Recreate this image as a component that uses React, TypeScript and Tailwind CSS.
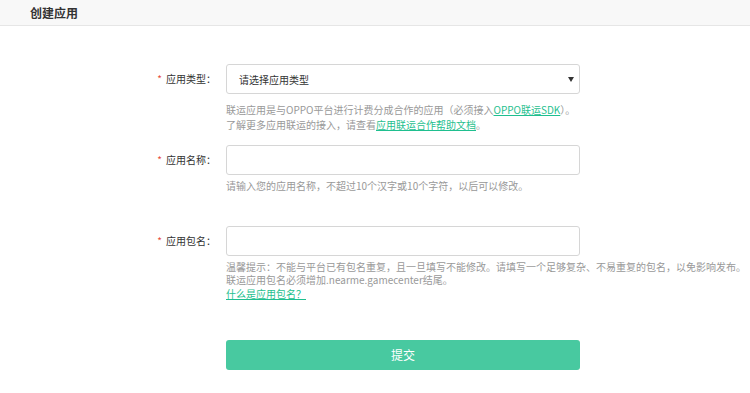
const font = "font-['Microsoft_YaHei','Noto_Sans_CJK_SC',sans-serif]";

const Label = ({ text }: { text: string }) => (
  <div className="w-[216px] shrink-0 text-right text-[10px] leading-[30px] text-[#333]">
    <span className="mr-[4px] text-[#e74c3c]">*</span>
    {text}
  </div>
);

const Link = ({ children }: { children: string }) => (
  <a href="#" className="text-[#1fbf8f] underline underline-offset-[1px]">
    {children}
  </a>
);

export default function App() {
  return (
    <div className={`${font} min-h-[393px] w-[750px] bg-white`}>
      <div className="flex h-[26px] items-center border-b border-[#e6e6e6] bg-[#f8f8f8] pl-[30px]">
        <span className="text-[12px] font-bold text-[#333]">创建应用</span>
      </div>

      <div className="flex flex-col pt-[38px]">
        {/* 应用类型 */}
        <div className="flex">
          <Label text="应用类型：" />
          <div className="ml-[10px] flex w-[354px] flex-col">
            <div className="flex h-[30px] items-center justify-between rounded-[3px] border border-[#d6d6d6] pl-[12px] pr-[5px] text-[10px] text-[#333]">
              <span>请选择应用类型</span>
              <svg width="6" height="5" viewBox="0 0 6 5">
                <path d="M0 0 L6 0 L3 5 Z" fill="#333" />
              </svg>
            </div>
            <div className="mt-[8px] w-[400px] text-[10px] leading-[15px] text-[#999]">
              <div>
                联运应用是与OPPO平台进行计费分成合作的应用（必须接入<Link>OPPO联运SDK</Link>）。
              </div>
              <div>
                了解更多应用联运的接入，请查看<Link>应用联运合作帮助文档</Link>。
              </div>
            </div>
          </div>
        </div>

        {/* 应用名称 */}
        <div className="mt-[13px] flex">
          <Label text="应用名称：" />
          <div className="ml-[10px] flex w-[354px] flex-col">
            <div className="h-[30px] rounded-[3px] border border-[#d6d6d6]" />
            <div className="mt-[3px] text-[10px] leading-[15px] text-[#999]">
              请输入您的应用名称，不超过10个汉字或10个字符，以后可以修改。
            </div>
          </div>
        </div>

        {/* 应用包名 */}
        <div className="mt-[33px] flex">
          <Label text="应用包名：" />
          <div className="ml-[10px] flex w-[354px] flex-col">
            <div className="h-[30px] rounded-[3px] border border-[#d6d6d6]" />
            <div className="mt-[5px] w-[530px] text-[10px] leading-[12.5px] text-[#999]">
              <div>温馨提示：不能与平台已有包名重复，且一旦填写不能修改。请填写一个足够复杂、不易重复的包名，以免影响发布。</div>
              <div>联运应用包名必须增加.nearme.gamecenter结尾。</div>
              <div className="mt-[1px] leading-[14px]">
                <Link>什么是应用包名？</Link>
              </div>
            </div>
          </div>
        </div>

        {/* 提交 */}
        <div className="mt-[39px] flex">
          <div className="w-[216px] shrink-0" />
          <button className="ml-[10px] h-[30px] w-[354px] rounded-[3px] bg-[#48c9a0] text-[12px] text-white">
            提交
          </button>
        </div>
      </div>
    </div>
  );
}
